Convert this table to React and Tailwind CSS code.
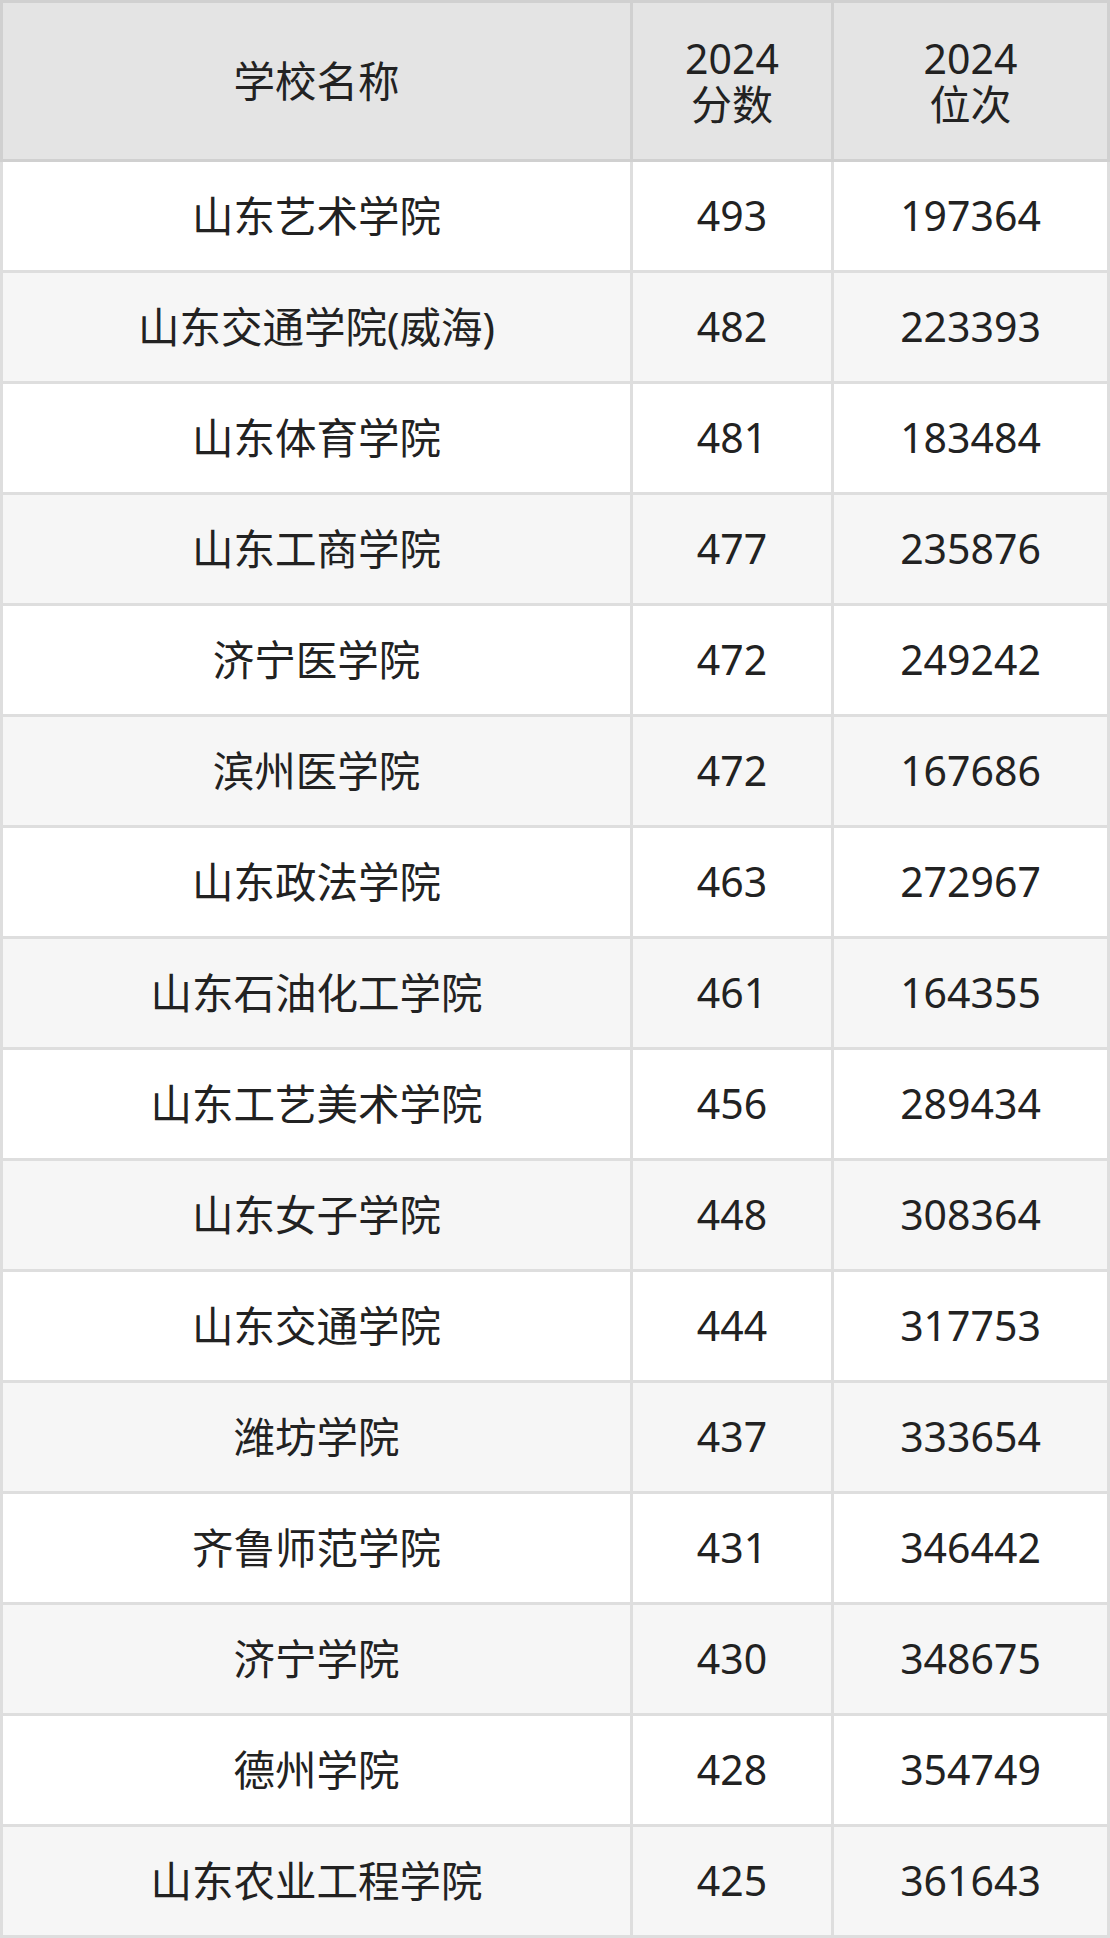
import React from "react";

const rows = [
  ["山东艺术学院", "493", "197364"],
  ["山东交通学院(威海)", "482", "223393"],
  ["山东体育学院", "481", "183484"],
  ["山东工商学院", "477", "235876"],
  ["济宁医学院", "472", "249242"],
  ["滨州医学院", "472", "167686"],
  ["山东政法学院", "463", "272967"],
  ["山东石油化工学院", "461", "164355"],
  ["山东工艺美术学院", "456", "289434"],
  ["山东女子学院", "448", "308364"],
  ["山东交通学院", "444", "317753"],
  ["潍坊学院", "437", "333654"],
  ["齐鲁师范学院", "431", "346442"],
  ["济宁学院", "430", "348675"],
  ["德州学院", "428", "354749"],
  ["山东农业工程学院", "425", "361643"],
];

export default function App() {
  return (
    <div
      className="w-[1110px] text-[41px] text-[#222222]"
      style={{ fontFamily: '"Noto Sans", "Noto Sans CJK SC", sans-serif' }}
    >
      <div className="grid grid-cols-[627px_198px_273px] gap-[3px] bg-[#d0d0d0] p-[3px]">
        <div className="h-[156px] bg-[#e4e4e4] flex items-center justify-center leading-[46px] text-[41.5px]">
          学校名称
        </div>
        <div className="h-[156px] bg-[#e4e4e4] flex flex-col items-center justify-center leading-[46px]">
          <span>2024</span>
          <span>分数</span>
        </div>
        <div className="h-[156px] bg-[#e4e4e4] flex flex-col items-center justify-center leading-[46px]">
          <span>2024</span>
          <span>位次</span>
        </div>
      </div>
      <div className="grid grid-cols-[627px_198px_273px] gap-[3px] bg-[#dedede] px-[3px] pb-[3px]">
        {rows.map((r, i) => {
          const bg = i % 2 === 0 ? "bg-white" : "bg-[#f6f6f6]";
          return (
            <React.Fragment key={i}>
              <div className={`h-[108px] ${bg} flex items-center justify-center text-[41.5px]`}>{r[0]}</div>
              <div className={`h-[108px] ${bg} flex items-center justify-center`}>{r[1]}</div>
              <div className={`h-[108px] ${bg} flex items-center justify-center`}>{r[2]}</div>
            </React.Fragment>
          );
        })}
      </div>
    </div>
  );
}
